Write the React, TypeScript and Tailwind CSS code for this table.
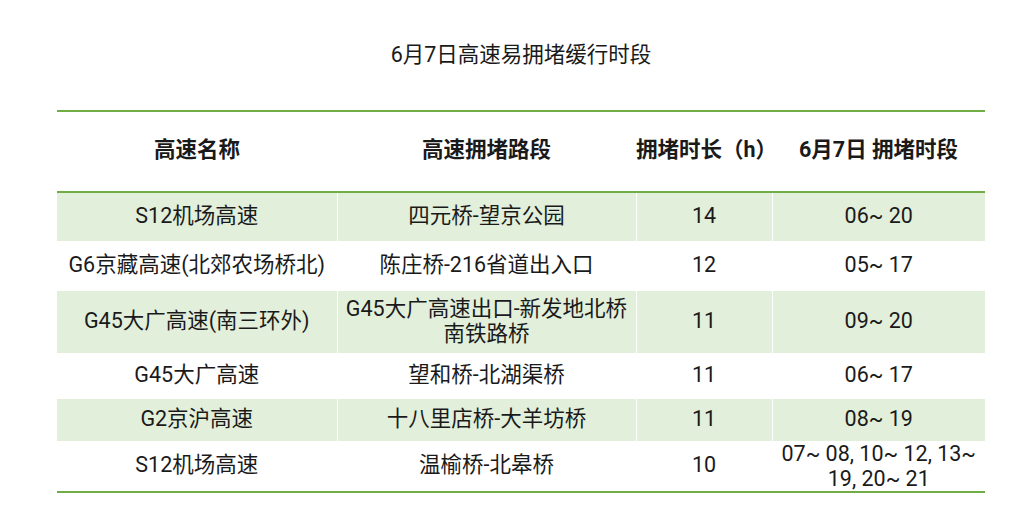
import React from 'react';

type Row = { name: string; section: string[]; hours: string; time: string[]; h: string };

const rows: Row[] = [
  { name: 'S12机场高速', section: ['四元桥-望京公园'], hours: '14', time: ['06~ 20'], h: 'h-[49px]' },
  { name: 'G6京藏高速(北郊农场桥北)', section: ['陈庄桥-216省道出入口'], hours: '12', time: ['05~ 17'], h: 'h-[50px]' },
  { name: 'G45大广高速(南三环外)', section: ['G45大广高速出口-新发地北桥', '南铁路桥'], hours: '11', time: ['09~ 20'], h: 'h-[62px]' },
  { name: 'G45大广高速', section: ['望和桥-北湖渠桥'], hours: '11', time: ['06~ 17'], h: 'h-[46px]' },
  { name: 'G2京沪高速', section: ['十八里店桥-大羊坊桥'], hours: '11', time: ['08~ 19'], h: 'h-[42px]' },
  { name: 'S12机场高速', section: ['温榆桥-北皋桥'], hours: '10', time: ['07~ 08, 10~ 12, 13~', '19, 20~ 21'], h: 'h-[50px]' },
];

const App: React.FC = () => {
  return (
    <div
      className="w-[1019px] h-[506px] bg-white text-[#1a1a1a] overflow-hidden"
      style={{ fontFamily: 'Roboto, "Noto Sans CJK SC", sans-serif' }}
    >
      {/* Title */}
      <div className="pt-[41px] h-[110px] text-center text-[21.5px] leading-[28px] pl-[23px]">
        6月7日高速易拥堵缓行时段
      </div>

      {/* Table */}
      <table className="ml-[57px] w-[928px] border-collapse table-fixed text-[21.5px] leading-[25px]">
        <colgroup>
          <col className="w-[280px]" />
          <col className="w-[299px]" />
          <col className="w-[136px]" />
          <col className="w-[213px]" />
        </colgroup>
        <thead>
          <tr className="h-[81px] border-t-2 border-b-2 border-[#70ad47]">
            <th className="font-bold text-center pb-[4px]">高速名称</th>
            <th className="font-bold text-center pb-[4px]">高速拥堵路段</th>
            <th className="font-bold text-center pb-[4px] whitespace-nowrap">拥堵时长（h）</th>
            <th className="font-bold text-center pb-[4px] whitespace-nowrap">6月7日 拥堵时段</th>
          </tr>
        </thead>
        <tbody>
          {rows.map((r, i) => (
            <tr
              key={i}
              className={`${r.h} ${i % 2 === 0 ? 'bg-[#e2efda]' : 'bg-white'} ${i === rows.length - 1 ? 'border-b-2 border-[#70ad47]' : ''}`}
            >
              <td className="text-center pb-[3px] border-r border-white whitespace-nowrap">{r.name}</td>
              <td className="text-center pb-[3px] border-r border-white whitespace-nowrap">
                {r.section.map((s) => (
                  <div key={s}>{s}</div>
                ))}
              </td>
              <td className="text-center pb-[3px] border-r border-white">{r.hours}</td>
              <td className={`text-center whitespace-nowrap ${r.time.length > 1 ? 'pb-0' : 'pb-[3px]'}`}>
                {r.time.map((t) => (
                  <div key={t}>{t}</div>
                ))}
              </td>
            </tr>
          ))}
        </tbody>
      </table>
    </div>
  );
};

export default App;
